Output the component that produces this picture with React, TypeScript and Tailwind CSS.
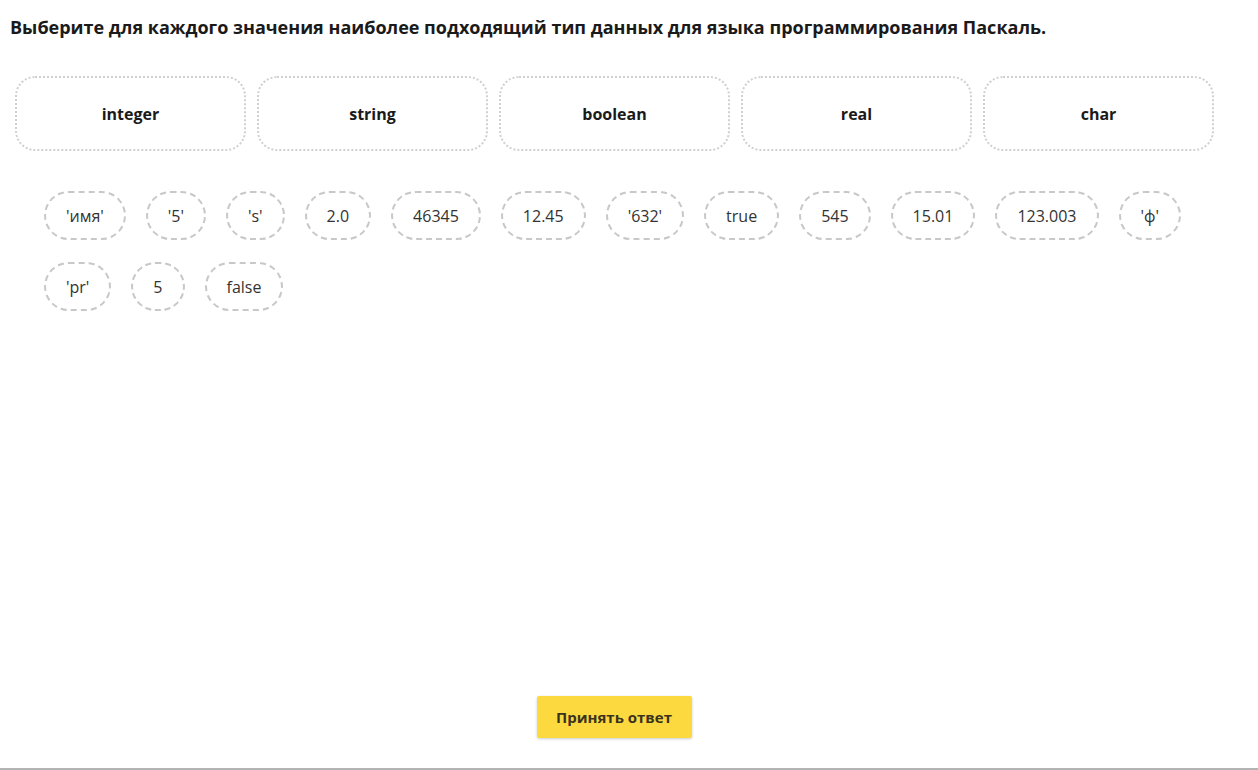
import React from 'react';

const types = ['integer', 'string', 'boolean', 'real', 'char'];
const values = ["'имя'", "'5'", "'s'", '2.0', '46345', '12.45', "'632'", 'true', '545', '15.01', '123.003', "'ф'", "'pr'", '5', 'false'];

export default function App() {
  return (
    <div className="h-[770px] flex flex-col bg-white text-[#1a1a1a] border-b-2 border-[#b3b3b3]" style={{ fontFamily: '"Open Sans", sans-serif' }}>
      <h1 className="pl-[10px] pt-[15px] text-[18px] font-bold leading-[24px]">
        Выберите для каждого значения наиболее подходящий тип данных для языка программирования Паскаль.
      </h1>

      {/* drop zones */}
      <div className="flex gap-[11px] pl-[15px] mt-[37px]">
        {types.map((t) => (
          <div
            key={t}
            className="w-[231px] h-[75px] rounded-[20px] border-2 border-dotted border-[#d0d0d0] flex items-center justify-center text-[16px] font-bold"
          >
            {t}
          </div>
        ))}
      </div>

      {/* chips */}
      <div className="flex flex-wrap gap-x-[20px] gap-y-[22px] pl-[44px] w-[1214px] mt-[40px]">
        {values.map((v, i) => (
          <div
            key={i}
            className="h-[49px] px-[20px] rounded-full border-2 border-dashed border-[#c8c8c8] flex items-center text-[16px] text-[#333]"
          >
            {v}
          </div>
        ))}
      </div>

      <div className="flex-1" />

      <div className="flex justify-center pb-[30px] pr-[30px]">
        <button className="w-[155px] h-[42px] bg-[#fdd940] rounded-[2px] shadow-[0_1px_3px_rgba(0,0,0,0.2)] text-[15px] font-bold text-[#3a3320]">
          Принять ответ
        </button>
      </div>
    </div>
  );
}
